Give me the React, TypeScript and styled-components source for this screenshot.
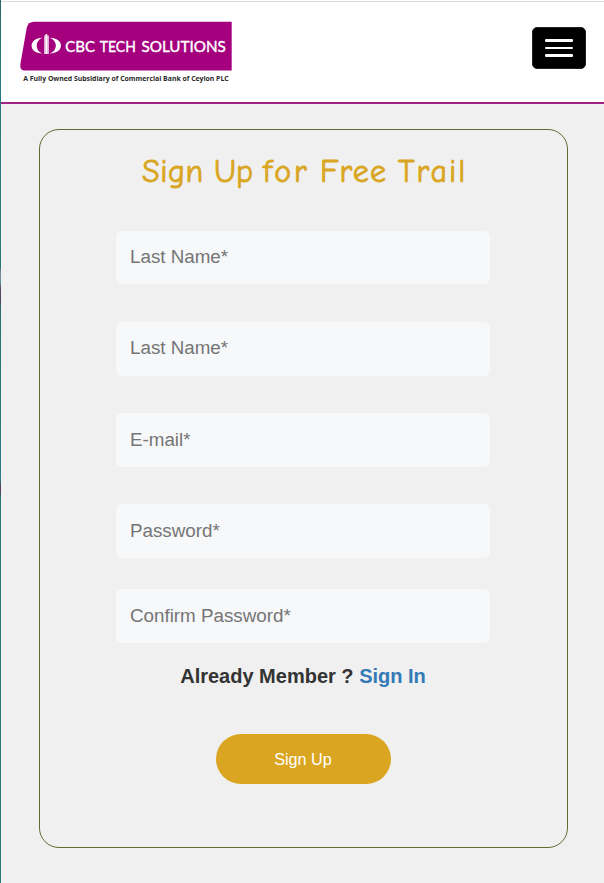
import React from "react";
import styled, { createGlobalStyle } from "styled-components";

const GlobalStyle = createGlobalStyle`
  *, *::before, *::after { box-sizing: border-box; }
  body {
    margin: 0;
    background: #f0f0f0;
    font-family: "Liberation Sans", Arial, sans-serif;
    color: #333;
  }
`;

const Page = styled.div`
  width: 604px;
  height: 883px;
  display: grid;
  grid-template-columns: 1px 1fr;
  overflow: hidden;
`;

const Edge = styled.div`
  background: linear-gradient(
    #28636b 0, #28787c 60px, #2a7f80 240px, #287378 267px, #7c8c9b 273px,
    #5b8c9b 283px, #574a5e 288px, #51435a 302px, #2a6f75 307px,
    #2a8082 480px, #52485e 484px, #51435a 492px, #28787c 498px, #28787c 100%
  );
`;

const Content = styled.div`
  display: flex;
  flex-direction: column;
`;

const Header = styled.header`
  height: 103px;
  margin-top: 1px;
  padding: 18px 18px 0 17px;
  display: flex;
  justify-content: space-between;
  align-items: flex-start;
  background: #fff;
  border-top: 1px solid #dadcdc;
  border-bottom: 2px solid #a12481;
  box-shadow: 0 -1px #fff;
`;

const Logo = styled.svg`
  display: block;
  width: 216px;
  height: 66px;
`;

const MenuButton = styled.button`
  width: 54px;
  height: 42px;
  margin-top: 7px;
  padding: 11px 12px;
  display: flex;
  flex-direction: column;
  justify-content: space-between;
  background: #000;
  border: 1px solid #222;
  border-radius: 5px;
`;

const Bar = styled.span<{ $h: number }>`
  height: ${(p) => p.$h}px;
  width: 28px;
  border-radius: 1px;
  background: #fff;
`;

const Card = styled.form`
  width: 529px;
  height: 719px;
  margin: 25px 0 0 38px;
  padding-right: 1px;
  border: 1px solid #666633;
  border-radius: 20px;
  display: flex;
  flex-direction: column;
  align-items: center;
`;

const Title = styled.h1`
  width: 325px;
  height: 46px;
  margin: 19px 0 0 3px;
  display: flex;
  font: 400 32px/46px "Comic Sans MS", "Comic Neue", Lato, sans-serif;
  color: #daa520;
  -webkit-text-stroke: 0.8px #daa520;
  white-space: pre;
`;

const Word = styled.span<{ $w: number; $ls: number }>`
  flex: 0 0 ${(p) => p.$w}px;
  min-width: 0;
  letter-spacing: ${(p) => p.$ls}px;
`;

const Field = styled.input<{ $h: number; $gap: number; $drop: number }>`
  width: 374px;
  height: ${(p) => p.$h}px;
  margin: ${(p) => p.$gap}px 0 0;
  padding: ${(p) => p.$drop}px 14px 2px;
  border: 0;
  border-radius: 6px;
  outline: 0;
  background: #f6f8fa;
  font: 18.8px "Liberation Sans", Arial, sans-serif;
  &::placeholder { color: #757575; opacity: 1; }
`;

const Member = styled.p`
  margin: 21px 0 0;
  font-size: 20px;
  line-height: 24px;
  font-weight: 700;
  white-space: nowrap;
`;

const Link = styled.a`
  color: #337ab7;
  text-decoration: none;
`;

const Submit = styled.button`
  width: 175px;
  height: 50px;
  margin: 46px 0 0 1px;
  padding: 0 1px 0 0;
  border: 0;
  border-radius: 25px;
  background: #daa520;
  color: #fff;
  font: 16.2px "Liberation Sans", Arial, sans-serif;
`;

const words = [
  { text: "Sign", w: 72, ls: 0.5 },
  { text: "Up", w: 49, ls: 0 },
  { text: "for", w: 57, ls: 2.8 },
  { text: "Free", w: 78, ls: 1.1 },
  { text: "Trail", w: 70, ls: 1.9 },
];

const fields = [
  { label: "Last Name*", type: "text", h: 53, gap: 36, drop: 0 },
  { label: "Last Name*", type: "text", h: 54, gap: 38, drop: 0 },
  { label: "E-mail*", type: "email", h: 54, gap: 37, drop: 2 },
  { label: "Password*", type: "password", h: 54, gap: 37, drop: 2 },
  { label: "Confirm Password*", type: "password", h: 54, gap: 31, drop: 2 },
];

const brandWords = [
  { text: "CBC", x: 65.3, w: 29.7 },
  { text: "TECH", x: 99.8, w: 36 },
  { text: "SOLUTIONS", x: 141.5, w: 84.3 },
];

const BrandLogo = () => (
  <Logo viewBox="18 20 216 66" role="img" aria-label="CBC Tech Solutions">
    <path d="M34 21.7H231.7V70.6H25Q19.4 70.6 20.4 64L26.7 28Q28 21.7 34 21.7Z" fill="#a4007e" />
    <g fill="#fff">
      <path d="M42.5 37.7C28 37.7 28 53.5 42.5 53.5C34.8 51 34.8 40.2 42.5 37.7Z" />
      <path d="M49.5 37.7C64.8 37.7 64.8 53.5 49.5 53.5C58 51 58 40.2 49.5 37.7Z" />
    </g>
    <path d="M44.1 35.5H45.4V34.3H47.4V35.5H48.9V54H44.1Z" fill="#fff" opacity="0.75" />
    <path d="M46.4 34.3V54" stroke="#fff" strokeWidth="1.2" />
    {brandWords.map((b) => (
      <text key={b.text} x={b.x} y="52.4" fill="#fff" stroke="#fff" strokeWidth="0.4" fontFamily="Lato" fontSize="15.8" textLength={b.w} lengthAdjust="spacingAndGlyphs">
        {b.text}
      </text>
    ))}
    <text x="23.2" y="81.2" fill="#2a2a2a" fontFamily="'Open Sans', sans-serif" fontSize="7" fontWeight="700" textLength="205.5" lengthAdjust="spacingAndGlyphs">
      A Fully Owned Subsidiary of Commercial Bank of Ceylon PLC
    </text>
  </Logo>
);

export default function App() {
  return (
    <>
      <GlobalStyle />
      <Page>
        <Edge />
        <Content>
          <Header>
            <BrandLogo />
            <MenuButton type="button" aria-label="Menu">
              <Bar $h={3} />
              <Bar $h={2} />
              <Bar $h={3} />
            </MenuButton>
          </Header>
          <Card onSubmit={(e) => e.preventDefault()}>
            <Title>
              {words.map((word, i) => (
                <Word key={word.text} $w={word.w} $ls={word.ls}>
                  {word.text + (i < words.length - 1 ? " " : "")}
                </Word>
              ))}
            </Title>
            {fields.map((f, i) => (
              <Field key={i} type={f.type} placeholder={f.label} $h={f.h} $gap={f.gap} $drop={f.drop} />
            ))}
            <Member>
              Already Member ? <Link href="#">Sign In</Link>
            </Member>
            <Submit type="submit">Sign Up</Submit>
          </Card>
        </Content>
      </Page>
    </>
  );
}
